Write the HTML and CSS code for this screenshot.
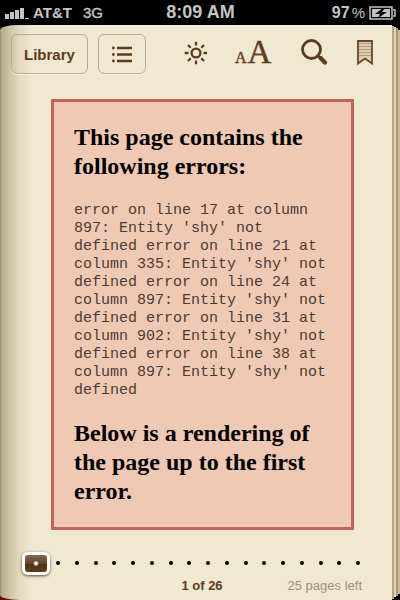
FILE: index.html
```
<!DOCTYPE html>
<html lang="en">
<head>
<meta charset="utf-8">
<meta name="viewport" content="width=device-width, initial-scale=1">
<title>Book reader</title>
<link rel="stylesheet" href="styles.css">
</head>
<body>
<header class="status">
  <div class="status-left">
    <svg class="signal" width="24" height="12" viewBox="0 0 24 12" aria-hidden="true"><path d="M0 7h4v5H0zM5 5h4v7H5zM10 3h4v9h-4zM15 1h4v11h-4zM20 11h4v1h-4z"/></svg>
    <span class="carrier">AT&amp;T</span>
    <span class="network">3G</span>
  </div>
  <time class="clock">8:09 AM</time>
  <div class="status-right">
    <span class="charge">97<span class="percent">%</span></span>
    <svg width="27" height="14" viewBox="0 0 27 14" aria-hidden="true"><path d="M1 1h22v12H1zM24 4h2v6h-2" fill="none" stroke="#c4c4c4" stroke-width="1.5"/><path d="M3 3h18v8H3z" fill="#c4c4c4"/><path d="M14 2 6 8h5l-2 4 9-6h-5l3-4z" fill="#000"/></svg>
  </div>
</header>
<div class="book">
  <main class="page">
    <nav class="toolbar">
      <button class="btn library" type="button">Library</button>
      <button class="btn contents" type="button" aria-label="Contents">
        <svg width="20" height="17" viewBox="0 0 20 17"><path d="M5 2h15M5 8.5h15M5 15h15" stroke="#5e3a1e" stroke-width="2.4"/><g fill="#5e3a1e"><circle cx="1.4" cy="2" r="1.4"/><circle cx="1.4" cy="8.5" r="1.4"/><circle cx="1.4" cy="15" r="1.4"/></g></svg>
      </button>
      <div class="tools">
        <button class="tool" type="button" aria-label="Brightness">
          <svg width="24" height="24" viewBox="-13 -12 24 24" fill="none" stroke="#5e3a1e" stroke-width="2.3"><circle r="4.4"/><path d="M0-11.3v3.8M0 7.5v3.8M-11.3 0h3.8M7.5 0h3.8M-8-8l2.7 2.7M5.3 5.3 8 8M-8 8l2.7-2.7M5.3-5.3 8-8"/></svg>
        </button>
        <button class="tool type" type="button" aria-label="Text size"><span class="small-a">A</span><span class="large-a">A</span></button>
        <button class="tool" type="button" aria-label="Search">
          <svg width="28" height="28" viewBox="0 0 28 28" fill="none" stroke="#5e3a1e"><circle cx="10.500" cy="10.500" r="9" stroke-width="2.8"/><path d="m17 17 3 3" stroke-width="3"/><path d="m19.500 19 4.500 4.500" stroke-width="4.200" stroke-linecap="round"/></svg>
        </button>
        <button class="tool" type="button" aria-label="Bookmark">
          <svg width="16" height="26" viewBox="0 0 16 26"><path d="M1 1h14v22.500l-7-5-7 5z" fill="#dccdb0"/><path d="M2 3.500h12M2 6.500h12M2 9.500h12M2 12.500h12M2 15.500h12" stroke="#b49c7d"/><path d="M1 1h14v22.500l-7-5-7 5z" fill="none" stroke="#68462c" stroke-width="1.8"/></svg>
        </button>
      </div>
    </nav>
    <article class="error">
      <h1>This page contains the following errors:</h1>
      <p>error on line 17 at column 897: Entity 'shy' not defined error on line 21 at column 335: Entity 'shy' not defined error on line 24 at column 897: Entity 'shy' not defined error on line 31 at column 902: Entity 'shy' not defined error on line 38 at column 897: Entity 'shy' not defined</p>
      <h1>Below is a rendering of the page up to the first error.</h1>
    </article>
    <div class="scrubber">
      <div class="dots" aria-hidden="true"><i></i><i></i><i></i><i></i><i></i><i></i><i></i><i></i><i></i><i></i><i></i><i></i><i></i><i></i><i></i><i></i><i></i></div>
      <input class="slider" type="range" min="1" max="26" value="1" aria-label="Page">
    </div>
    <footer class="pages">
      <strong class="current">1 of 26</strong>
      <span class="left">25 pages left</span>
    </footer>
  </main>
  <div class="edges" aria-hidden="true"><i></i><i></i><i></i><i></i></div>
</div>
</body>
</html>
```
FILE: styles.css
```
* { box-sizing: border-box; }
body {
  margin: 0;
  min-height: 100vh;
  display: flex;
  flex-direction: column;
  background: #000;
  font-family: "Liberation Sans", Arial, sans-serif;
}
.status {
  height: 25px;
  padding: 0 4px 0 5px;
  display: grid;
  grid-template-columns: 1fr auto 1fr;
  align-items: center;
  color: #c4c4c4;
}
.status-left, .status-right { display: flex; align-items: center; }
.status-right { justify-content: flex-end; gap: 4px; }
.signal { fill: #c4c4c4; margin-right: 4px; }
.carrier { font-size: 15px; font-weight: bold; margin-right: 11px; }
.network { font-size: 15px; -webkit-text-stroke: 0.400px #c4c4c4; }
.clock { font-size: 18px; font-weight: bold; }
.charge { font-size: 16px; font-weight: bold; }
.percent { font-size: 15px; margin-left: 2px; font-weight: normal; }

.book {
  flex: 1;
  display: flex;
  background: linear-gradient(#000 90%, #6a0a0c);
}
.page {
  flex: 1;
  min-width: 0;
  display: flex;
  flex-direction: column;
  background: linear-gradient(90deg, #999075 0, #b8ad8e 2px, #cfc5a6 10px, #e3dabf 20px, #f0e8d1 32px);
  border-radius: 18px 0 0 20px / 5px 0 0 5px;
}
.edges { display: flex; background: #000; }
.edges i { width: 2px; background: #b5a682; margin-top: 1px; margin-bottom: 1px; }
.edges i:nth-child(2) { background: #dfd3b3; margin-top: 2px; margin-bottom: 3px; }
.edges i:nth-child(3) { background: #ab9a74; margin-top: 3px; margin-bottom: 4px; }
.edges i:nth-child(4) { background: #cabb96; margin-top: 5px; margin-bottom: 6px; }

.toolbar {
  display: flex;
  align-items: center;
  padding: 9px 19px 0 11px;
}
.btn {
  height: 40px;
  border: 1px solid #b9ab8d;
  border-radius: 6px;
  background: transparent;
  color: #5e3a1e;
  box-shadow: 0 1px 0 #fbf6e6;
  display: flex;
  align-items: center;
  justify-content: center;
  padding: 0 12px;
}
.library { font: bold 15px "Liberation Sans", Arial, sans-serif; }
.contents { width: 48px; margin-left: 10px; }
.tools {
  flex: 1;
  height: 40px;
  padding-bottom: 2px;
  display: flex;
  align-items: center;
  justify-content: flex-end;
  gap: 28px;
}
.tool {
  border: 0;
  padding: 0;
  background: transparent;
  color: #5e3a1e;
  display: flex;
}
.type {
  width: 38px;
  gap: 1px;
  align-items: baseline;
  font-family: "Liberation Serif", "Times New Roman", serif;
  line-height: 32px;
  padding-top: 3px;
  -webkit-text-stroke: 0.400px #5e3a1e;
}
.small-a { font-size: 16px; }
.large-a { font-size: 33px; }

.error {
  margin: 25px 38px 0 51px;
  padding: 21px 20px;
  border: 3px solid #c4625c;
  background: #efc9b4;
}
.error h1 {
  margin: 0;
  font: bold 24px/29px "Liberation Serif", "Times New Roman", serif;
  color: #000;
}
.error p {
  margin: 21px 0 19px;
  font: 15px/18px "Liberation Mono", "Courier New", monospace;
  color: #4c3b34;
}

.scrubber { position: relative; margin: auto 30px 0 22px; height: 28px; }
.dots {
  height: 28px;
  padding: 0 2px 0 34px;
  display: flex;
  align-items: center;
  justify-content: space-between;
}
.dots i { width: 4px; height: 4px; border-radius: 50%; background: #000; }
.slider {
  position: absolute;
  inset: 0;
  width: 100%;
  height: 28px;
  margin: 0;
  background: transparent;
  appearance: none;
}
.slider::-webkit-slider-thumb {
  appearance: none;
  width: 28px;
  height: 23px;
  border: 3px solid #fff;
  border-radius: 6px;
  background:
    radial-gradient(circle, #fff 1px, transparent 3px),
    linear-gradient(#8e7560, #64432a 50%, #52310f 51%, #62401f);
  background-origin: border-box;
  box-shadow: 0 1px 3px #554a38;
}
.pages {
  display: grid;
  grid-template-columns: 1fr auto 1fr;
  padding: 1px 30px 6px 42px;
  font-size: 13px;
  line-height: 16px;
}
.current { grid-column: 2; color: #5e3a1e; }
.left { text-align: right; color: #a08f7e; }
```
